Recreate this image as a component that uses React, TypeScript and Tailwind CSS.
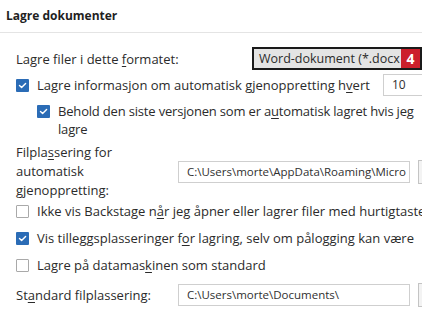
import React from 'react';

const Check: React.FC<{ checked?: boolean }> = ({ checked }) =>
    checked ? (
        <span className="flex h-[13px] w-[13px] shrink-0 items-center justify-center rounded-[1px] bg-[#2b6cb6]">
            <svg width="9" height="9" viewBox="0 0 9 9" fill="none">
                <path d="M1.5 4.6 L3.6 6.6 L7.6 2.4" stroke="white" strokeWidth="1.4" strokeLinecap="round" strokeLinejoin="round" />
            </svg>
        </span>
    ) : (
        <span className="h-[13px] w-[13px] shrink-0 rounded-[1px] border border-[#a9a9a9] bg-white" />
    );

const U: React.FC<{ children: React.ReactNode }> = ({ children }) => (
    <span className="underline decoration-1 underline-offset-[2px]">{children}</span>
);

const PathBox: React.FC<{ value: string }> = ({ value }) => (
    <div className="flex h-[22px] w-[232px] shrink-0 items-center overflow-hidden whitespace-nowrap border border-[#cfcfcf] bg-white pl-[8px] text-[11.5px] text-[#303030]">
        {value}
    </div>
);

const App: React.FC = () => {
    return (
        <div className="h-[311px] w-[422px] overflow-hidden whitespace-nowrap bg-white font-['Open_Sans',sans-serif] text-[13px] leading-[18px] text-[#2b2b2b]">
            <div className="h-[33px] border-b border-[#e4e4e4] pl-[6px] pt-[6px] text-[12px] font-bold leading-[20px] text-[#1f1f1f]">
                Lagre dokumenter
            </div>

            <div className="pl-4">
                <div className="mt-[14px] flex h-[23px] items-center">
                    <span className="w-[236px] shrink-0">Lagre filer i dette <U>f</U>ormatet:</span>
                    <div className="relative flex h-[23px] w-[170px] shrink-0 items-center overflow-hidden border-2 border-[#1a1a1a] bg-[#e4e4e4] pl-[5px] text-[12.5px] text-[#2b2b2b]">
                        <span>Word-dokument (*.docx</span>
                        <span className="absolute right-0 top-0 flex h-[19px] w-[19px] items-center justify-center bg-[#cc1f2b] text-[14px] font-bold text-white">4</span>
                    </div>
                </div>

                <div className="mt-[4px] flex h-[22px] items-center">
                    <Check checked />
                    <span className="ml-[8px] w-[346px] shrink-0">
                        Lagre informasjon om automatisk <U>g</U>jenoppretting h<U>v</U>ert
                    </span>
                    <div className="flex h-[22px] w-[60px] shrink-0 items-center border border-[#cfcfcf] pl-[8px] text-[12px] text-[#303030]">10</div>
                </div>

                <div className="mt-[6px] flex items-start pl-[21px]">
                    <span className="mt-[3px]">
                        <Check checked />
                    </span>
                    <span className="ml-[8px] tracking-[-0.18px]">
                        Behold den siste versjonen som er a<U>u</U>tomatisk lagret hvis jeg
                        <br />
                        lagre
                    </span>
                </div>

                <div className="mt-[5px] flex items-center">
                    <div className="w-[162px] shrink-0 leading-[19px]">
                        Filpla<U>s</U>sering for
                        <br />
                        automatisk
                        <br />
                        <U>g</U>jenoppretting:
                    </div>
                    <PathBox value="C:\Users\morte\AppData\Roaming\Micro" />
                    <div className="ml-[8px] h-[24px] w-[30px] shrink-0 border border-[#c4c4c4] bg-[#f3f3f3]" />
                </div>

                <div className="mt-[2px] flex h-[18px] items-center">
                    <Check />
                    <span className="ml-[8px]">
                        Ikke vis Backstage n<U>å</U>r jeg åpner eller lagrer filer med hurtigtaster
                    </span>
                </div>

                <div className="mt-[9px] flex h-[18px] items-center">
                    <Check checked />
                    <span className="ml-[8px]">
                        Vis tilleggsplasseringer f<U>o</U>r lagring, selv om pålogging kan være
                    </span>
                </div>

                <div className="mt-[9px] flex h-[18px] items-center">
                    <Check />
                    <span className="ml-[8px]">
                        Lagre på datamas<U>k</U>inen som standard
                    </span>
                </div>

                <div className="mt-[10px] flex h-[22px] items-center">
                    <span className="w-[162px] shrink-0">
                        St<U>a</U>ndard filplassering:
                    </span>
                    <PathBox value="C:\Users\morte\Documents\" />
                    <div className="ml-[8px] h-[24px] w-[30px] shrink-0 border border-[#c4c4c4] bg-[#f3f3f3]" />
                </div>
            </div>
        </div>
    );
};

export default App;
